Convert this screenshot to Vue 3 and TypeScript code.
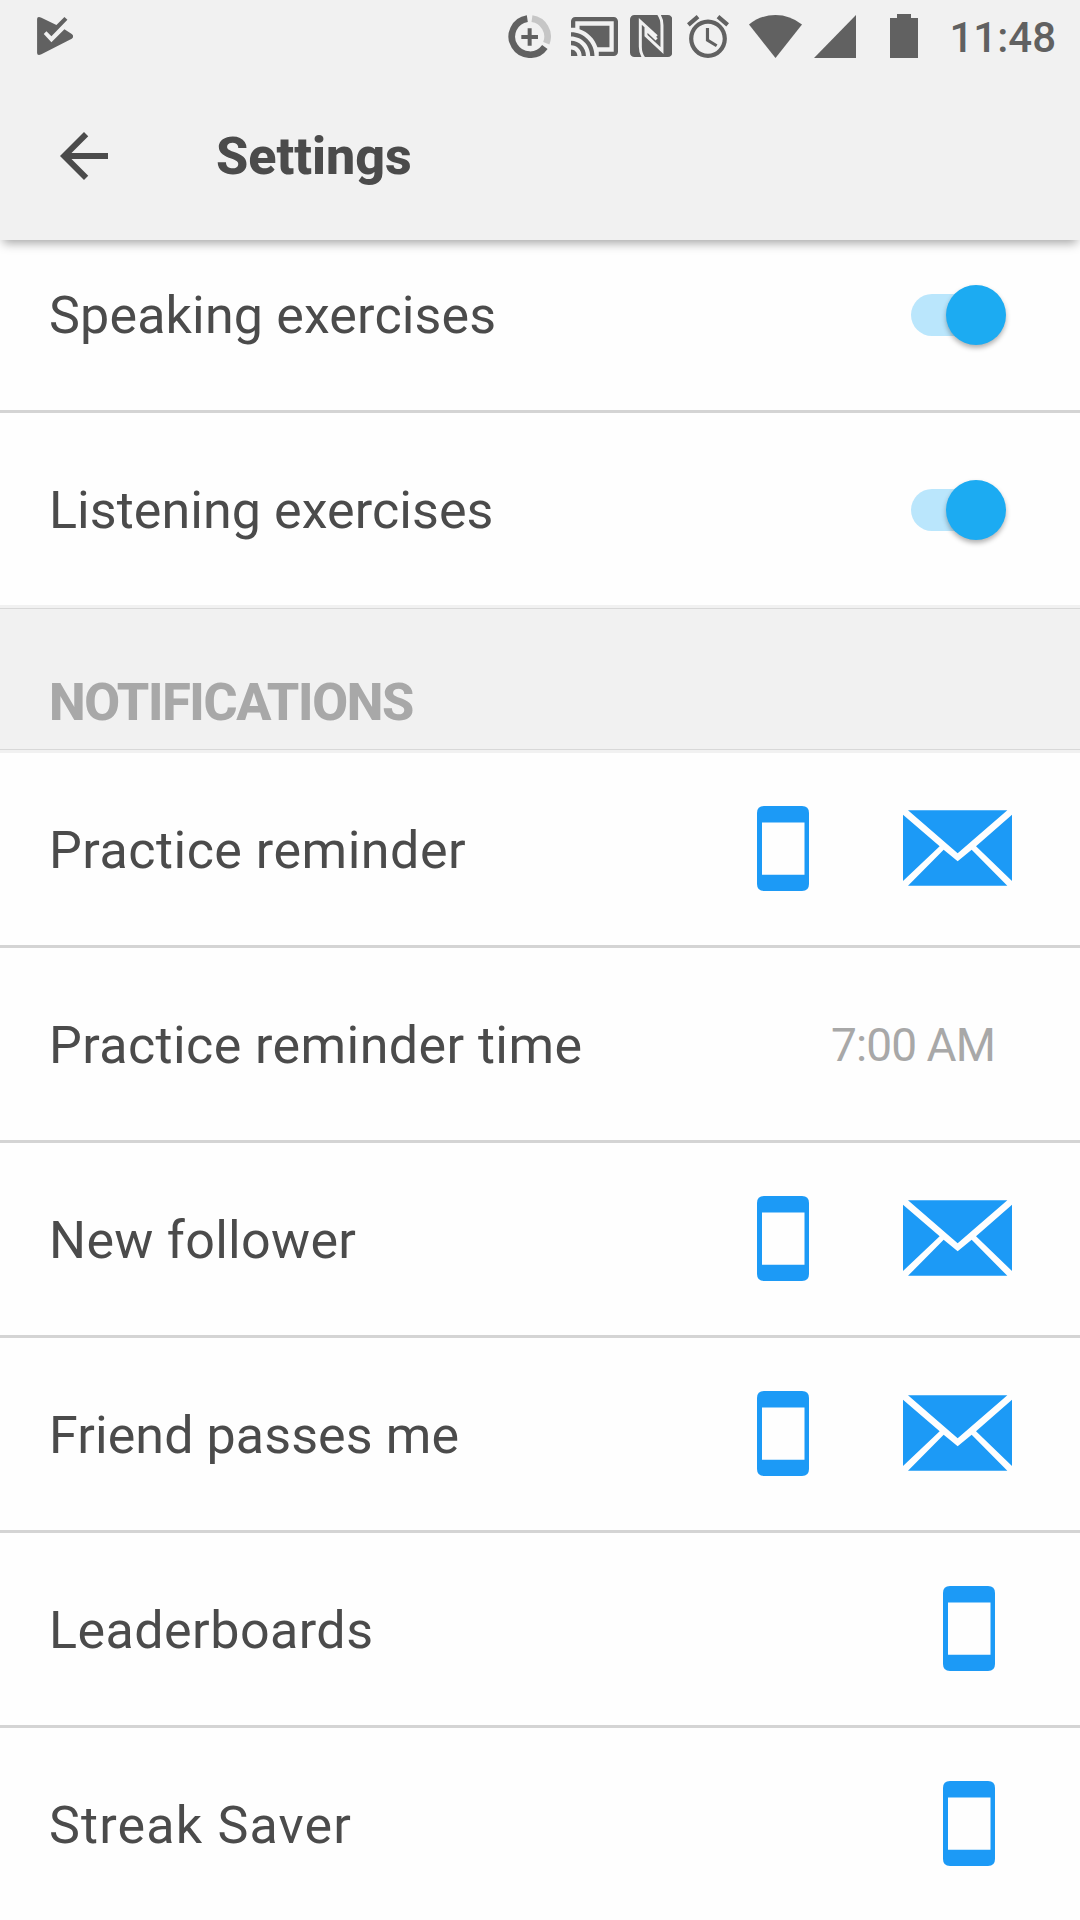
<script setup lang="ts">
interface SettingRow {
  label: string
  spacing: number
  time?: string
  phone?: boolean
  mail?: boolean
}

const general: SettingRow[] = [
  { label: 'Speaking exercises', spacing: 0.16 },
  { label: 'Listening exercises', spacing: 0.08 },
]

const notifications: SettingRow[] = [
  { label: 'Practice reminder', spacing: 0.51, phone: true, mail: true },
  { label: 'Practice reminder time', spacing: 0.42, time: '7:00 AM' },
  { label: 'New follower', spacing: 0.3, phone: true, mail: true },
  { label: 'Friend passes me', spacing: 0.1, phone: true, mail: true },
  { label: 'Leaderboards', spacing: 0.47, phone: true },
  { label: 'Streak Saver', spacing: 1.18, phone: true },
]
</script>

<template>
  <div class="screen">
    <header class="top">
      <div class="status">
        <svg class="play" viewBox="0 0 109 114" width="36.5" height="38">
          <path d="M0 6Q0 -3 13 2L58 24L82 0L91 8L43 58L28 43L20 51L43 76L82 37L104 51Q113 58 104 65L13 112Q0 117 0 108Z" />
        </svg>
        <svg class="saver" viewBox="54 44 130 130" width="43.3" height="43.3">
          <path d="M112 54.8A54.5 54.5 0 1 0 164.6 140" fill="none" stroke="#616161" stroke-width="20" />
          <path d="M126 55A54.5 54.5 0 0 1 169 129" fill="none" stroke="#c6c6c6" stroke-width="20" />
          <path d="M113 84h12v20h19v12h-19v20h-12v-20h-19v-12h19z" />
        </svg>
        <svg class="cast" viewBox="1 3 22 18" width="47" height="39" preserveAspectRatio="none">
          <path d="M1 18v3h3c0-1.66-1.34-3-3-3zm0-4v2c2.76 0 5 2.24 5 5h2c0-3.87-3.13-7-7-7zm18-7H5v1.63c3.96 1.28 7.09 4.41 8.37 8.37H19V7zM1 10v2c4.97 0 9 4.03 9 9h2c0-6.08-4.93-11-11-11zm20-7H3c-1.1 0-2 .9-2 2v3h2V5h18v14h-7v2h7c1.1 0 2-.9 2-2V5c0-1.1-.9-2-2-2z" />
        </svg>
        <svg class="nfc" viewBox="420 45 127 126" width="42.3" height="42">
          <rect x="420" y="45" width="127" height="126" rx="13" />
          <path d="M461 173Q451 160 451 140V64L500 109M506 43Q516 56 516 76V152L468 107V88L500 118" fill="none" stroke="#f1f1f1" stroke-width="9" />
        </svg>
        <svg class="alarm" viewBox="2 1.86 20 20.14" width="42" height="43" preserveAspectRatio="none">
          <path d="M22 5.72l-4.6-3.86-1.29 1.53 4.6 3.86L22 5.72zM7.88 3.39L6.6 1.86 2 5.71l1.29 1.53 4.59-3.85zM12.5 8H11v6l4.75 2.85.75-1.23-4-2.37V8zM12 4c-4.97 0-9 4.03-9 9s4.02 9 9 9c4.97 0 9-4.03 9-9s-4.03-9-9-9zm0 16c-3.87 0-7-3.13-7-7s3.13-7 7-7 7 3.13 7 7-3.13 7-7 7z" />
        </svg>
        <svg class="wifi" viewBox="0 0 53 43" width="53" height="43">
          <path d="M0 9.5Q12 0 26.5 0T53 9.5L26.5 43Z" />
        </svg>
        <svg class="signal" viewBox="0 0 42 43" width="42" height="43">
          <path d="M42 0V43H0Z" />
        </svg>
        <svg class="battery" viewBox="0 0 28 44" width="28" height="44">
          <path d="M7 0H21V4H28V44H0V4H7Z" />
        </svg>
        <span class="clock">11:48</span>
      </div>
      <div class="bar">
        <svg class="back" viewBox="4 4 16 16" width="48" height="48">
          <path d="M20 11H7.83l5.59-5.59L12 4l-8 8 8 8 1.41-1.41L7.83 13H20v-2z" />
        </svg>
        <h1 class="title">Settings</h1>
      </div>
    </header>

    <main>
      <section class="general">
        <div v-for="row in general" :key="row.label" class="row">
          <span class="label" :style="{ letterSpacing: row.spacing + 'px' }">{{ row.label }}</span>
          <span class="switch"><span class="thumb" /></span>
        </div>
      </section>
      <h2 class="heading">NOTIFICATIONS</h2>
      <section>
        <div v-for="row in notifications" :key="row.label" class="row">
          <span class="label" :style="{ letterSpacing: row.spacing + 'px' }">{{ row.label }}</span>
          <span v-if="row.time" class="time">{{ row.time }}</span>
          <svg v-if="row.phone" class="phone" :class="{ paired: row.mail }" viewBox="0 0 52 85" width="52" height="85">
            <path fill-rule="evenodd" d="M7 0H45Q52 0 52 7V78Q52 85 45 85H7Q0 85 0 78V7Q0 0 7 0ZM5 16.5V68.7H47.5V16.5Z" />
          </svg>
          <svg v-if="row.mail" class="mail" viewBox="519 90 327 228" width="109" height="76">
            <path d="M534 90.5H832L683 220ZM519 104L629 199L519 303ZM846 104L738 199L846 303ZM534 317.5L641 209L683 244L725 209L832 317.5Z" />
          </svg>
        </div>
      </section>
    </main>
  </div>
</template>

<style>
body {
  margin: 0;
}
</style>

<style scoped>
.screen {
  width: 1080px;
  height: 1920px;
  overflow: hidden;
  background: #fefefe;
  color: #4b4b4b;
  font-family: Roboto, "Liberation Sans", sans-serif;
}
svg {
  display: block;
  flex: none;
}
.top {
  position: relative;
  z-index: 1;
  height: 240px;
  background: #f1f1f1;
  box-shadow: 0 6px 10px -3px rgba(0, 0, 0, 0.36);
}
.status {
  display: flex;
  align-items: flex-start;
  box-sizing: border-box;
  height: 72px;
  padding: 14.5px 0 0 36.8px;
  fill: #616161;
  color: #616161;
}
.play { margin: 2.5px 434.7px 0 0; }
.saver { margin-right: 19.7px; }
.cast { margin: 2.5px 12px 0 0; }
.nfc { margin: 0.5px 14.4px 0 0; }
.alarm { margin: 0.5px 20.3px 0 0; }
.wifi { margin-right: 12px; }
.signal { margin-right: 34px; }
.battery { margin: -0.5px 31.5px 0 0; }
.clock {
  margin-top: -2px;
  font-size: 42px;
  font-weight: 500;
  line-height: 49px;
}
.bar {
  display: flex;
  align-items: center;
  height: 168px;
  padding-left: 60px;
}
.back {
  margin-right: 108px;
  fill: #4b4b4b;
}
.title {
  margin: 0;
  padding-top: 2px;
  font-size: 52px;
  font-weight: 800;
  line-height: 60px;
}
.general {
  margin-top: -22px;
}
.general .row:last-child {
  border-color: #f1f1f1;
}
.row {
  display: flex;
  align-items: center;
  box-sizing: border-box;
  height: 195px;
  padding: 1px 68px 0 49px;
  border-bottom: 3px solid #d4d4d4;
}
.row:last-child {
  border-bottom-color: transparent;
}
.label {
  flex: 1;
  padding-top: 2px;
  font-size: 52px;
  line-height: 60px;
  white-space: nowrap;
}
.switch {
  display: flex;
  align-items: center;
  width: 84px;
  height: 42px;
  margin-right: 17px;
  border-radius: 21px;
  background: #bae6fc;
}
.thumb {
  flex: none;
  width: 60px;
  height: 60px;
  margin-left: 35px;
  border-radius: 50%;
  background: #1cabf2;
  box-shadow: 0 3px 5px rgba(0, 0, 0, 0.3);
}
.heading {
  box-sizing: border-box;
  height: 145px;
  margin: 0;
  padding: 71px 0 0 49px;
  border-top: 1px solid #d8d8d8;
  background: linear-gradient(#d8d8d8, #d8d8d8) 0 140px / 100% 1px no-repeat #f1f1f1;
  color: #a8a8a8;
  font-size: 52px;
  font-weight: 800;
  letter-spacing: -1.35px;
  line-height: 46px;
}
.time {
  margin-right: 17px;
  color: #a8a8a8;
  font-size: 46px;
  letter-spacing: -0.9px;
}
.phone {
  margin: 0 17px 2px 0;
  fill: #1c9af6;
}
.phone.paired {
  margin-right: 94px;
}
.mail {
  margin-bottom: 4px;
  fill: #1c9af6;
}
</style>
